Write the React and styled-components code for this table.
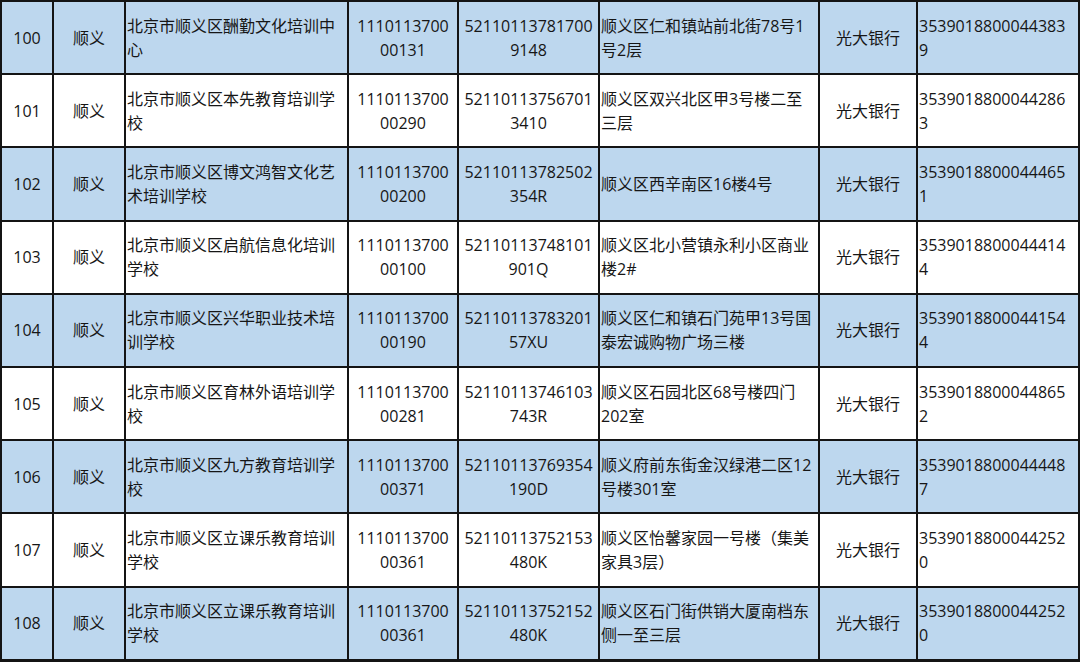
import styled, { createGlobalStyle } from "styled-components";

const GlobalStyle = createGlobalStyle`
    html, body {
        margin: 0;
        padding: 0;
        background: #ffffff;
    }
    body {
        font-family: "Open Sans", "Noto Sans CJK SC", sans-serif;
    }
`;

const Sheet = styled.div`
    display: grid;
    grid-template-columns: 50px 70px 221px 108px 139px 218px 96px 160px;
    grid-auto-rows: 71.2px;
    gap: 2px;
    padding: 2px 2px 3px;
    width: max-content;
    background-color: #141414;
`;

const Cell = styled.div`
    display: flex;
    align-items: center;
    justify-content: ${(p) => (p.$left ? "flex-start" : "center")};
    text-align: ${(p) => (p.$left ? "left" : "center")};
    padding: ${(p) => (p.$left ? "0 1px" : "0 2px")};
    background-color: ${(p) => (p.$shaded ? "#bdd7ee" : "#ffffff")};
    color: #161616;
    font-size: 16px;
    line-height: 24px;
    white-space: pre-line;
    overflow: hidden;
`;

const rows = [
    ["100", "北京市顺义区酬勤文化培训中\n心", "1110113700\n00131", "52110113781700\n9148", "顺义区仁和镇站前北街78号1\n号2层", "3539018800044383\n9"],
    ["101", "北京市顺义区本先教育培训学\n校", "1110113700\n00290", "52110113756701\n3410", "顺义区双兴北区甲3号楼二至\n三层", "3539018800044286\n3"],
    ["102", "北京市顺义区博文鸿智文化艺\n术培训学校", "1110113700\n00200", "52110113782502\n354R", "顺义区西辛南区16楼4号", "3539018800044465\n1"],
    ["103", "北京市顺义区启航信息化培训\n学校", "1110113700\n00100", "52110113748101\n901Q", "顺义区北小营镇永利小区商业\n楼2#", "3539018800044414\n4"],
    ["104", "北京市顺义区兴华职业技术培\n训学校", "1110113700\n00190", "52110113783201\n57XU", "顺义区仁和镇石门苑甲13号国\n泰宏诚购物广场三楼", "3539018800044154\n4"],
    ["105", "北京市顺义区育林外语培训学\n校", "1110113700\n00281", "52110113746103\n743R", "顺义区石园北区68号楼四门\n202室", "3539018800044865\n2"],
    ["106", "北京市顺义区九方教育培训学\n校", "1110113700\n00371", "52110113769354\n190D", "顺义府前东街金汉绿港二区12\n号楼301室", "3539018800044448\n7"],
    ["107", "北京市顺义区立课乐教育培训\n学校", "1110113700\n00361", "52110113752153\n480K", "顺义区怡馨家园一号楼（集美\n家具3层）", "3539018800044252\n0"],
    ["108", "北京市顺义区立课乐教育培训\n学校", "1110113700\n00361", "52110113752152\n480K", "顺义区石门街供销大厦南档东\n侧一至三层", "3539018800044252\n0"],
];

function App() {
    return (
        <>
            <GlobalStyle />
            <Sheet>
                {rows.map(([no, name, code, credit, address, account], i) => {
                    const shaded = i % 2 === 0;
                    return [
                        <Cell key={no + "a"} $shaded={shaded}>{no}</Cell>,
                        <Cell key={no + "b"} $shaded={shaded}>顺义</Cell>,
                        <Cell key={no + "c"} $shaded={shaded} $left>{name}</Cell>,
                        <Cell key={no + "d"} $shaded={shaded}>{code}</Cell>,
                        <Cell key={no + "e"} $shaded={shaded}>{credit}</Cell>,
                        <Cell key={no + "f"} $shaded={shaded} $left>{address}</Cell>,
                        <Cell key={no + "g"} $shaded={shaded}>光大银行</Cell>,
                        <Cell key={no + "h"} $shaded={shaded} $left>{account}</Cell>,
                    ];
                })}
            </Sheet>
        </>
    );
}

export default App;
